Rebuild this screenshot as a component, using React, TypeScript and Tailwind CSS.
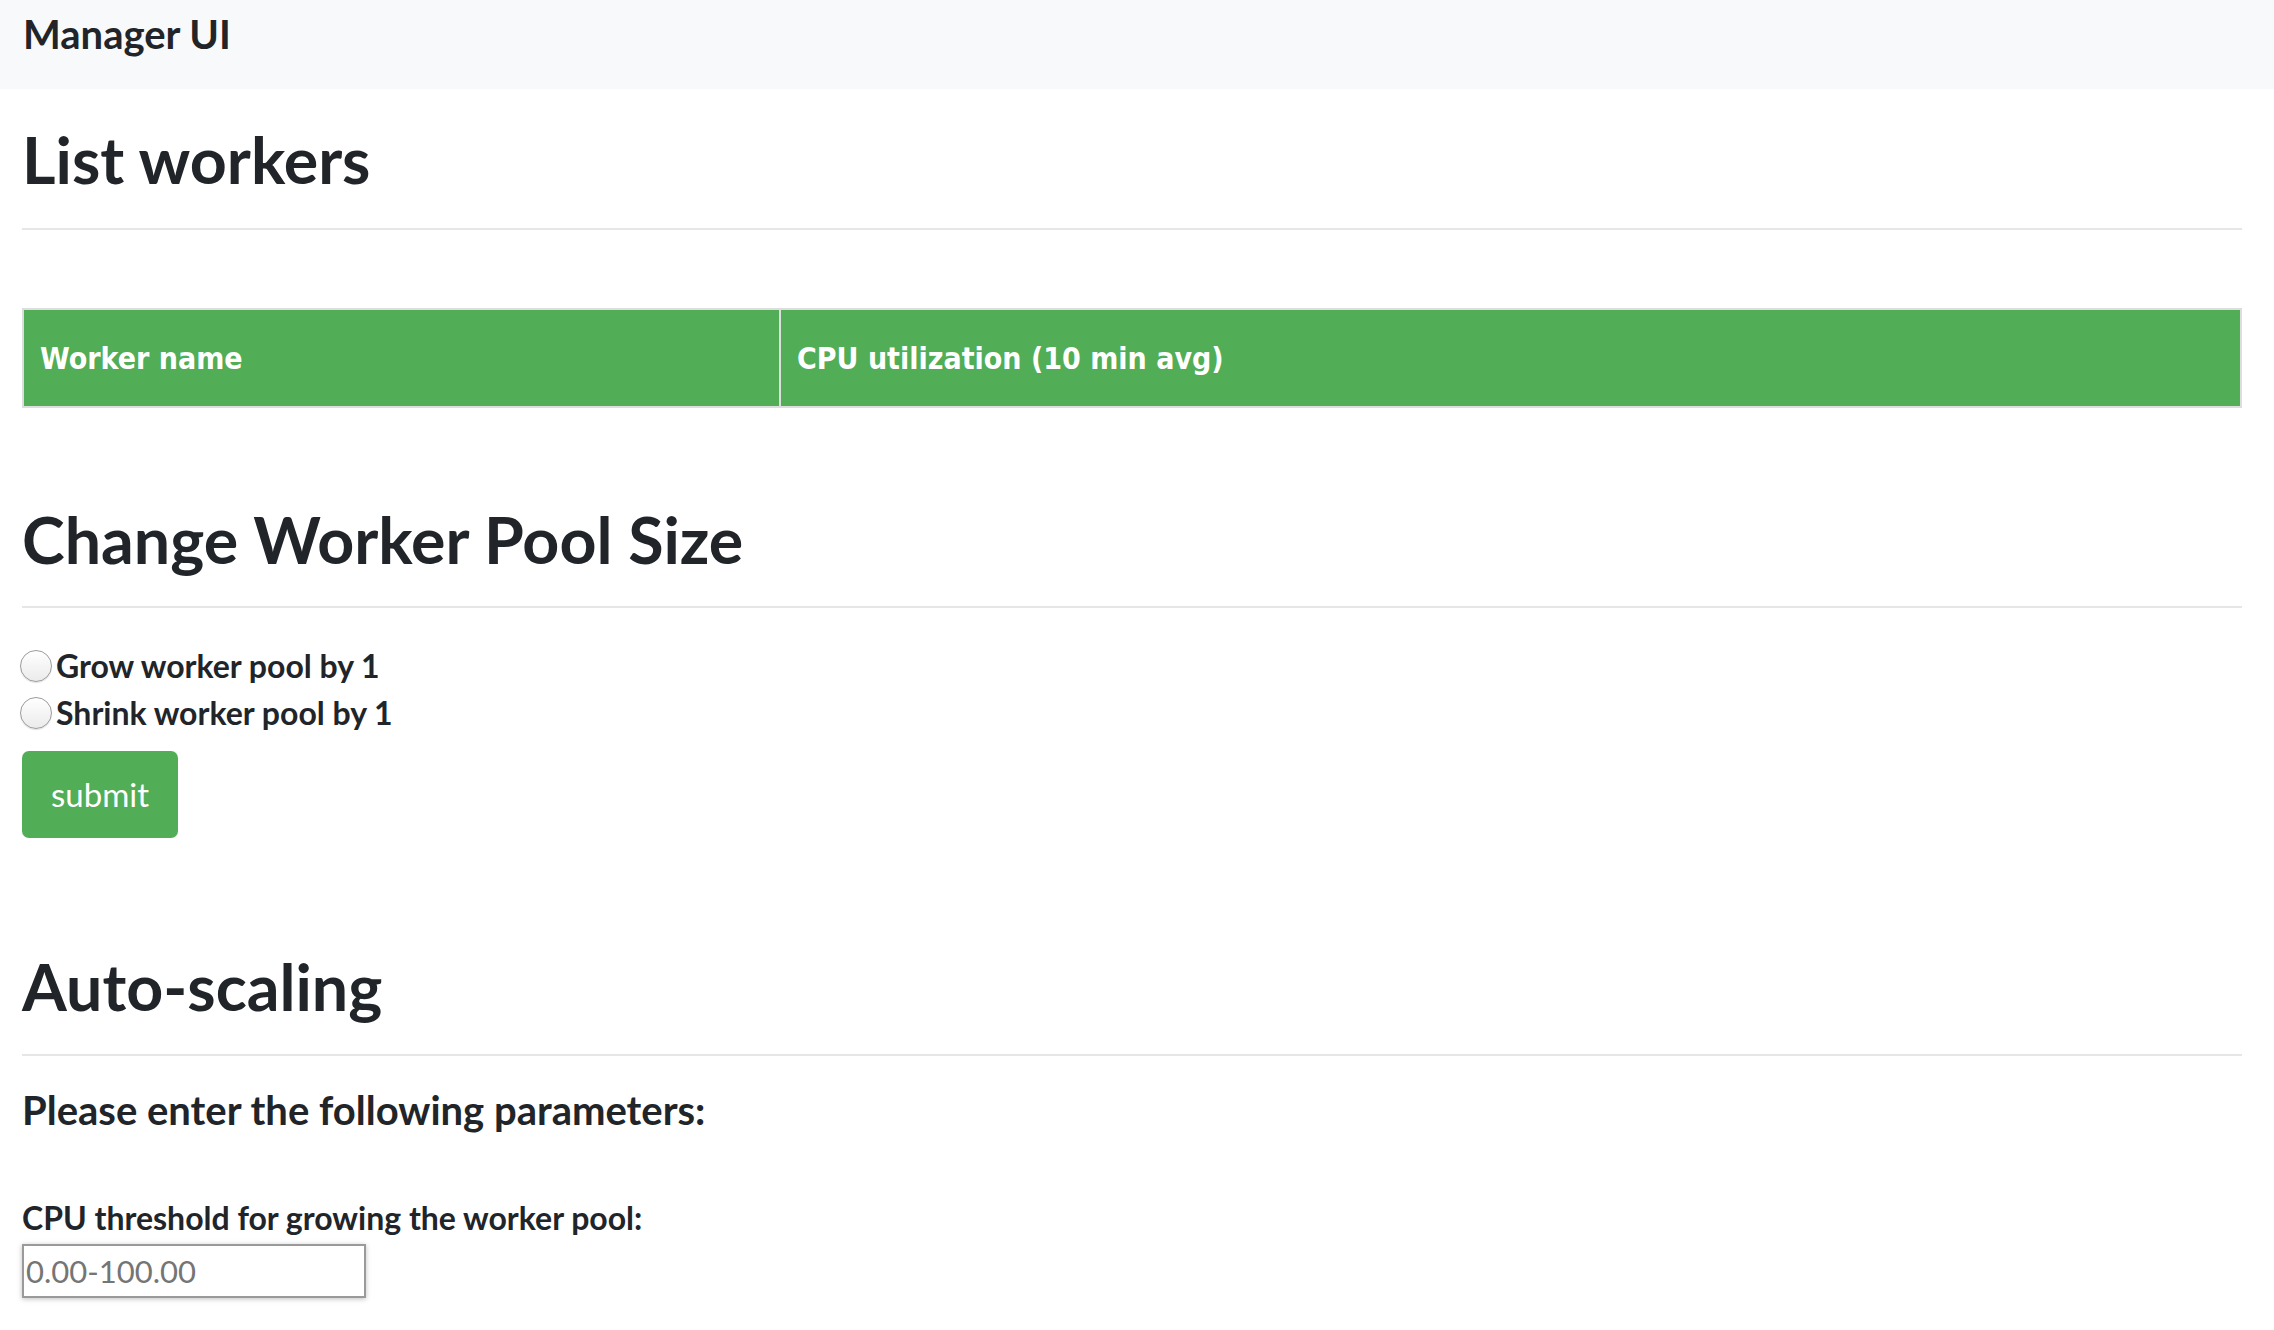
export default function App() {
  return (
    <div className="min-h-screen bg-white text-[#212529] font-['Lato','Noto_Sans',sans-serif]">
      {/* navbar */}
      <nav className="h-[89px] bg-[#f8f9fa] pt-[10px] pl-[23px]">
        <span className="text-[40px] leading-[48px] font-bold">Manager UI</span>
      </nav>

      <main className="pl-[22px] pr-[32px]">
        <h1 className="mt-[32px] text-[64.5px] leading-[77px] font-bold">List workers</h1>
        <div className="mt-[30px] h-[2px] bg-[#e6e6e6]" />

        <table className="mt-[78px] w-full border-collapse border-2 border-[#dddddd] font-['DejaVu_Sans_Condensed','DejaVu_Sans',sans-serif] text-white">
          <thead>
            <tr className="h-[98px] bg-[#51ad56]">
              <th className="w-[757px] border-r-2 border-[#dddddd] pl-[16px] text-left text-[30px] font-bold">
                Worker name
              </th>
              <th className="pl-[16px] text-left text-[30px] font-bold">CPU utilization (10 min avg)</th>
            </tr>
          </thead>
        </table>

        <h1 className="mt-[93px] text-[64.5px] leading-[77px] font-bold">Change Worker Pool Size</h1>
        <div className="mt-[28px] h-[2px] bg-[#e6e6e6]" />

        <form className="mt-[34px]">
          <label className="flex h-[47px] items-center -ml-[2px]">
            <span className="h-[32px] w-[32px] shrink-0 rounded-full border border-[#9c9c9c] bg-gradient-to-b from-white to-[#ebebeb] shadow-[0_1px_1px_rgba(0,0,0,0.12)]" />
            <span className="ml-[4px] text-[32px] font-bold leading-[38px]">Grow worker pool by 1</span>
          </label>
          <label className="flex h-[47px] items-center -ml-[2px]">
            <span className="h-[32px] w-[32px] shrink-0 rounded-full border border-[#9c9c9c] bg-gradient-to-b from-white to-[#ebebeb] shadow-[0_1px_1px_rgba(0,0,0,0.12)]" />
            <span className="ml-[4px] text-[32px] font-bold leading-[38px]">Shrink worker pool by 1</span>
          </label>
          <button
            type="button"
            className="mt-[15px] flex h-[87px] w-[156px] items-center justify-center rounded-[7px] bg-[#51ad56] text-[33px] text-white"
          >
            submit
          </button>
        </form>

        <h1 className="mt-[110px] text-[64.5px] leading-[77px] font-bold">Auto-scaling</h1>
        <div className="mt-[29px] h-[2px] bg-[#e6e6e6]" />

        <h4 className="mt-[30px] text-[40px] leading-[48px] font-bold">Please enter the following parameters:</h4>

        <label className="mt-[65px] block text-[32px] leading-[38px] font-bold">
          CPU threshold for growing the worker pool:
        </label>
        <input
          placeholder="0.00-100.00"
          className="mt-[7px] h-[54px] w-[344px] border-2 border-[#9a9a9a] px-[2px] text-[31px] placeholder:text-[#757575] shadow-[0_1px_5px_rgba(0,0,0,0.25)] outline-none"
        />
      </main>
    </div>
  );
}
